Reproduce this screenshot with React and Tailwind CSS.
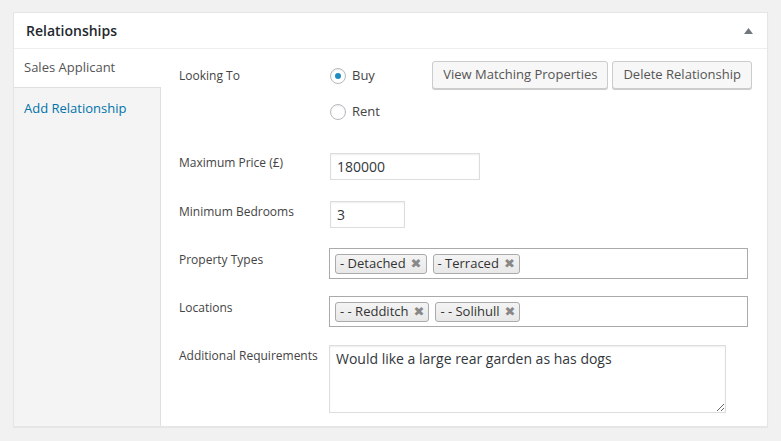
const font = { fontFamily: '"Open Sans", "Liberation Sans", sans-serif' };

function Radio({ checked, label }) {
  return (
    <div className="flex items-center h-[18px]">
      <span className="w-4 h-4 rounded-full border border-[#b4b9be] bg-white shadow-[inset_0_1px_2px_rgba(0,0,0,0.07)] flex items-center justify-center">
        {checked && <span className="w-[6px] h-[6px] rounded-full bg-[#1e8cbe]" />}
      </span>
      <span className="ml-[6px] text-[13px] text-[#444]">{label}</span>
    </div>
  );
}

function Tag({ text }) {
  return (
    <span className="flex items-center h-[20px] pl-[4px] pr-[4px] mr-[6px] rounded-[3px] border border-[#aaa] bg-gradient-to-b from-[#f4f4f4] to-[#e8e8e8] text-[13px] text-[#333] leading-none">
      {text}
      <span className="ml-[5px] text-[13px] text-[#888]" style={{ fontFamily: '"DejaVu Sans", sans-serif' }}>✖</span>
    </span>
  );
}

function Row({ label, pt, children, className = "" }) {
  return (
    <div className={"flex " + className}>
      <div className="w-[151px] shrink-0 text-[12px] leading-[18px] text-[#444]" style={{ paddingTop: pt }}>
        {label}
      </div>
      <div className="flex-1">{children}</div>
    </div>
  );
}

export default function App() {
  return (
    <div className="w-[781px] h-[441px] bg-[#f1f1f1] pt-[12px] pl-[13px]" style={font}>
      <div className="w-[755px] h-[415px] bg-white border border-[#e5e5e5] shadow-[0_1px_1px_rgba(0,0,0,0.04)] flex flex-col">
        <div className="h-[36px] shrink-0 border-b border-[#eee] flex items-center justify-between pl-[12px] pr-[14px]">
          <h2 className="text-[14px] font-semibold text-[#23282d]">Relationships</h2>
          <svg width="9" height="6" viewBox="0 0 9 6"><path d="M4.5 0 L9 6 L0 6 Z" fill="#72777c" /></svg>
        </div>
        <div className="flex flex-1">
          <div className="w-[147px] shrink-0 bg-[#f4f4f4] border-r border-[#dfdfdf]">
            <div className="h-[39px] bg-white -mr-[1px] border-b border-[#dfdfdf] pl-[10px] flex items-center text-[13px] text-[#555]">
              Sales Applicant
            </div>
            <div className="h-[41px] pl-[10px] flex items-center text-[13px] text-[#0073aa]">
              Add Relationship
            </div>
          </div>
          <div className="flex-1 pl-[18px] pr-[15px] pt-[12px]">
            <Row label="Looking To" pt={6}>
              <div className="flex justify-between">
                <div className="flex flex-col gap-[18px] pt-[6px]">
                  <Radio checked label="Buy" />
                  <Radio label="Rent" />
                </div>
                <div className="flex gap-[4px]">
                  <button className="h-[28px] px-[10px] text-[13px] text-[#555] bg-[#f7f7f7] border border-[#ccc] rounded-[3px] shadow-[0_1px_0_#ccc]">
                    View Matching Properties
                  </button>
                  <button className="h-[28px] px-[10px] text-[13px] text-[#555] bg-[#f7f7f7] border border-[#ccc] rounded-[3px] shadow-[0_1px_0_#ccc]">
                    Delete Relationship
                  </button>
                </div>
              </div>
            </Row>
            <Row label="Maximum Price (£)" pt={1} className="mt-[32px]">
              <div className="w-[150px] h-[27px] border border-[#ddd] shadow-[inset_0_1px_2px_rgba(0,0,0,0.07)] px-[6px] flex items-center text-[14px] text-[#32373c]">
                180000
              </div>
            </Row>
            <Row label="Minimum Bedrooms" pt={2} className="mt-[21px]">
              <div className="w-[75px] h-[27px] border border-[#ddd] shadow-[inset_0_1px_2px_rgba(0,0,0,0.07)] px-[6px] flex items-center text-[14px] text-[#32373c]">
                3
              </div>
            </Row>
            <Row label="Property Types" pt={3} className="mt-[20px]">
              <div className="-ml-[1px] w-[419px] h-[31px] border border-[#aaa] flex items-center pl-[5px]">
                <Tag text="- Detached" />
                <Tag text="- Terraced" />
              </div>
            </Row>
            <Row label="Locations" pt={3} className="mt-[17px]">
              <div className="-ml-[1px] w-[419px] h-[31px] border border-[#aaa] flex items-center pl-[5px]">
                <Tag text="- - Redditch" />
                <Tag text="- - Solihull" />
              </div>
            </Row>
            <Row label="Additional Requirements" pt={2} className="mt-[18px]">
              <textarea
                readOnly
                defaultValue="Would like a large rear garden as has dogs"
                className="-ml-[1px] block w-[397px] h-[68px] border border-[#ddd] shadow-[inset_0_1px_2px_rgba(0,0,0,0.07)] px-[6px] py-[3px] text-[14px] leading-[19px] text-[#32373c] outline-none"
                style={font}
              />
            </Row>
          </div>
        </div>
      </div>
    </div>
  );
}
